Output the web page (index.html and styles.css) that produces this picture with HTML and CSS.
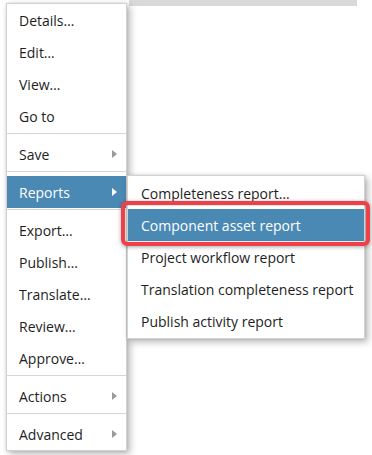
FILE: index.html
```html
<!DOCTYPE html>
<html>

<head>
  <meta charset="utf-8">
  <title>Context menu</title>
  <link rel="stylesheet" href="styles.css">
</head>

<body>
  <div class="toolbar"></div>

  <ul class="menu main">
    <li class="item">Details…</li>
    <li class="item">Edit…</li>
    <li class="item">View…</li>
    <li class="item">Go to</li>
    <li class="sep"></li>
    <li class="item sub">Save <span class="arrow"></span></li>
    <li class="sep"></li>
    <li class="item sub active">Reports <span class="arrow"></span>
      <ul class="menu submenu">
        <li class="item">Completeness report…</li>
        <li class="item active marked">Component asset report</li>
        <li class="item">Project workflow report</li>
        <li class="item">Translation completeness report</li>
        <li class="item">Publish activity report</li>
      </ul>
    </li>
    <li class="sep"></li>
    <li class="item">Export…</li>
    <li class="item">Publish…</li>
    <li class="item">Translate…</li>
    <li class="item">Review…</li>
    <li class="item">Approve…</li>
    <li class="sep"></li>
    <li class="item sub">Actions <span class="arrow"></span></li>
    <li class="sep"></li>
    <li class="item sub">Advanced <span class="arrow"></span></li>
  </ul>
</body>

</html>
```

FILE: styles.css
```css
* {
  box-sizing: border-box;
}

body {
  margin: 0;
  background: #fff;
  font-family: "Open Sans", "Liberation Sans", sans-serif;
  font-size: 14px;
  color: #1e1e1e;
}

.toolbar {
  margin-left: 129px;
  width: 228px;
  height: 6px;
  background: #d9d9d9;
}

.menu {
  list-style: none;
  margin: 0;
  padding: 0;
  background: #fff;
  border: 1px solid #d2d2d2;
  box-shadow: 3px 3px 7px rgba(0, 0, 0, 0.28), 0 0 3px rgba(0, 0, 0, 0.12);
}

.main {
  position: absolute;
  top: 3px;
  left: 6px;
  width: 121px;
}

.item {
  position: relative;
  display: flex;
  align-items: center;
  justify-content: space-between;
  height: 32px;
  padding: 0 9px 0 12px;
  white-space: nowrap;
}

.item.active {
  background: #4a89b3;
  color: #fff;
}

.sep {
  height: 1px;
  margin: 1px 0 4px;
  background: #d6d6d6;
}

.arrow {
  width: 0;
  height: 0;
  border-left: 5px solid #9a9a9a;
  border-top: 4px solid transparent;
  border-bottom: 4px solid transparent;
}

.active .arrow {
  border-left-color: #fff;
}

.submenu {
  position: absolute;
  top: -1px;
  left: 120px;
  width: 238px;
  padding: 1px 0;
  color: #1e1e1e;
}

.submenu .item {
  padding-left: 13px;
}

.submenu .item.active {
  color: #fff;
}

.marked::after {
  content: "";
  position: absolute;
  top: -8px;
  bottom: -5px;
  left: -7px;
  right: -6px;
  border: 4px solid #ef3f48;
  border-radius: 6px;
  box-shadow: 0 1px 4px rgba(0, 0, 0, 0.35), inset 0 0 2px rgba(0, 0, 0, 0.35);
}
```
